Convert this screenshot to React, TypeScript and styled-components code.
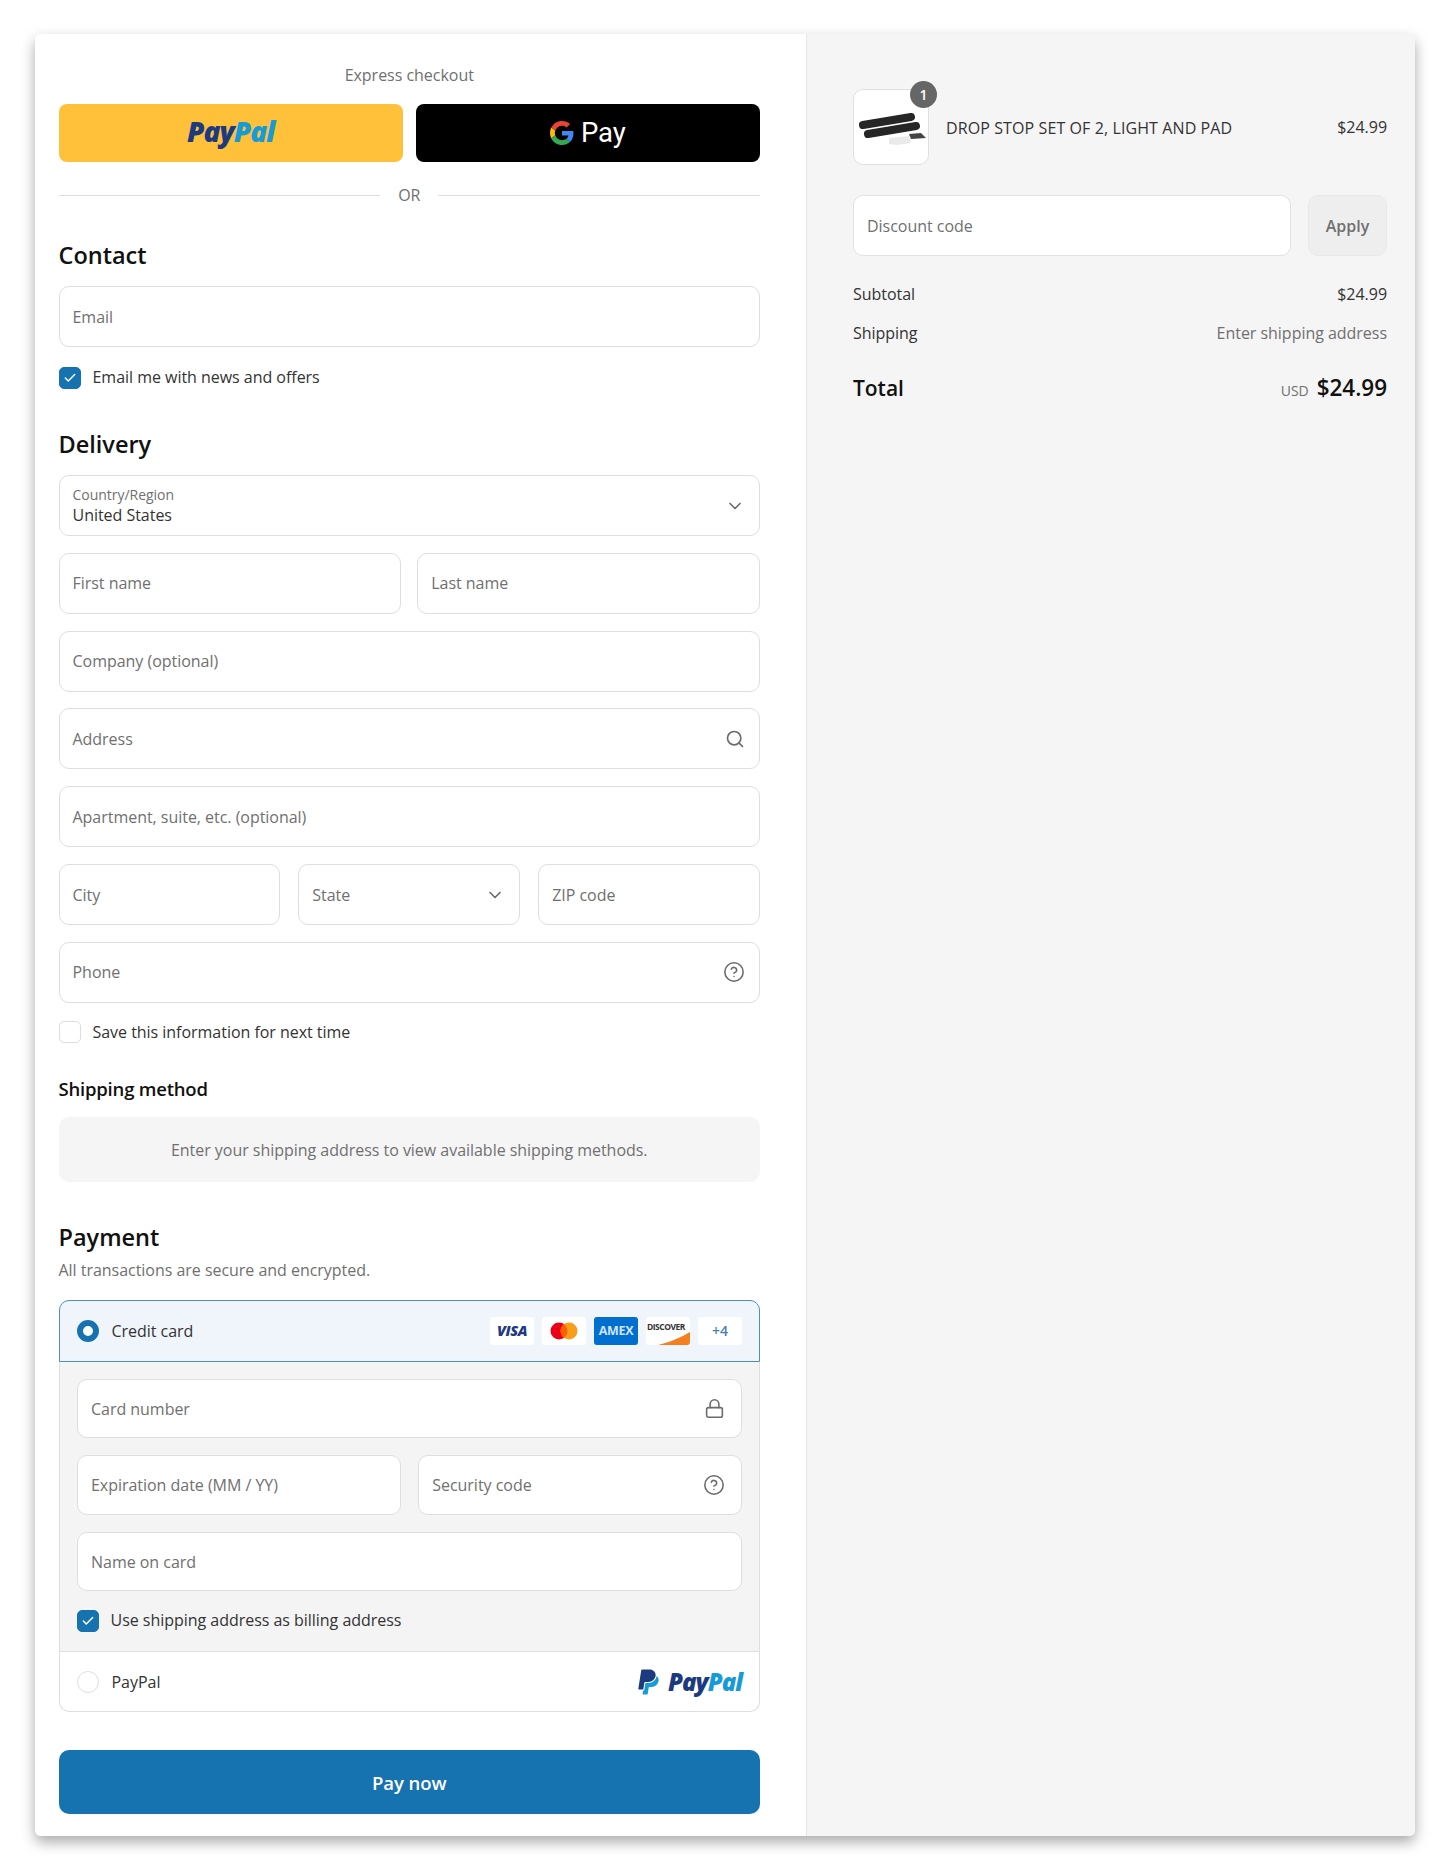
import { CircleHelp, ChevronDown, Lock, Search, Check } from "lucide-react";
import styled, { createGlobalStyle } from "styled-components";

const GlobalStyle = createGlobalStyle`
    html, body {
        margin: 0;
        padding: 0;
        background: #ffffff;
    }
    body {
        font-family: "Open Sans", "Liberation Sans", sans-serif;
        font-size: 16px;
        letter-spacing: -0.03px;
        color: #333333;
    }
`;

const BLUE = "#1773b0";

// page frame
const Page = styled.div`
    width: 1450px;
    height: 1871px;
    padding: 34px 35px 0;
    box-sizing: border-box;
`;

const Card = styled.main`
    display: grid;
    grid-template-columns: 771px 609px;
    height: 1802px;
    border-radius: 6px;
    overflow: hidden;
    box-shadow: 0 6px 14px rgba(0, 0, 0, 0.34);
`;

const LeftPane = styled.section`
    display: flex;
    flex-direction: column;
    padding: 30px 46px 0 23.5px;
    background: #ffffff;
`;

const RightPane = styled.aside`
    display: flex;
    flex-direction: column;
    padding: 47px 28px 0 46px;
    background: #f5f5f5;
    border-left: 1px solid #e6e6e6;
    box-sizing: border-box;
`;

// express checkout
const ExpressLabel = styled.div`
    text-align: center;
    line-height: 22px;
    color: #707070;
`;

const ExpressRow = styled.div`
    display: grid;
    grid-template-columns: 1fr 1fr;
    gap: 13px;
    margin-top: 18px;
`;

const ExpressButton = styled.div<{ $bg: string }>`
    display: flex;
    align-items: center;
    justify-content: center;
    height: 58px;
    border-radius: 8px;
    background: ${props => props.$bg};
`;

const Wordmark = styled.span<{ $size: number; $lift?: number }>`
    margin-bottom: ${props => props.$lift ?? 0}px;
    font-family: "Open Sans", sans-serif;
    font-size: ${props => props.$size}px;
    line-height: 30px;
    font-weight: 800;
    font-style: italic;
    letter-spacing: -1px;
    color: #1c3a80;
    & b {
        font-weight: 800;
        color: #179bd7;
    }
`;

const GPayText = styled.span`
    margin-left: 7px;
    font-family: "Roboto", sans-serif;
    font-size: 27.5px;
    line-height: 34px;
    color: #ffffff;
`;

const OrRow = styled.div`
    display: flex;
    align-items: center;
    gap: 18px;
    height: 20px;
    margin-top: 23px;
    color: #707070;
    &::before, &::after {
        content: "";
        flex: 1;
        height: 1px;
        background: #dedede;
    }
`;

const Heading = styled.h2<{ $top: number }>`
    margin: ${props => props.$top}px 0 0;
    font-size: 23.5px;
    line-height: 28px;
    font-weight: 600;
    letter-spacing: 0;
    color: #111111;
`;

const SubHeading = styled.h3`
    margin: 33px 0 0;
    font-size: 18.5px;
    line-height: 24px;
    font-weight: 600;
    letter-spacing: -0.2px;
    color: #111111;
`;

const Rows = styled.div<{ $top: number; $gap?: number }>`
    display: flex;
    flex-direction: column;
    gap: ${props => props.$gap ?? 16.83}px;
    margin-top: ${props => props.$top}px;
`;

const Cols = styled.div<{ $count: number; $gap: number }>`
    display: grid;
    grid-template-columns: repeat(${props => props.$count}, 1fr);
    gap: ${props => props.$gap}px;
`;

const Field = styled.div<{ $inner?: boolean }>`
    display: flex;
    align-items: center;
    justify-content: space-between;
    height: ${props => props.$inner ? 59.5 : 61}px;
    padding: 0 ${props => props.$inner ? 16 : 14}px 0 ${props => props.$inner ? 13.5 : 13}px;
    box-sizing: border-box;
    background: #ffffff;
    border: 1px solid #dedede;
    border-radius: 10px;
    color: #707070;
    & svg {
        flex: none;
        color: #6b6b6b;
    }
`;

const SelectText = styled.div`
    display: flex;
    flex-direction: column;
    & small {
        font-size: 14px;
        line-height: 18px;
        color: #707070;
    }
    & span {
        line-height: 22px;
        color: #333333;
    }
`;

const CheckRow = styled.label<{ $top: number }>`
    display: flex;
    align-items: center;
    gap: 12px;
    margin-top: ${props => props.$top}px;
    line-height: 23px;
    color: #333333;
`;

const CheckBox = styled.span<{ $on?: boolean }>`
    display: flex;
    align-items: center;
    justify-content: center;
    flex: none;
    width: 22px;
    height: 22px;
    box-sizing: border-box;
    border-radius: 5px;
    background: ${props => props.$on ? BLUE : "#ffffff"};
    border: 1px solid ${props => props.$on ? BLUE : "#dedede"};
    color: #ffffff;
`;

const Notice = styled.div`
    display: flex;
    align-items: center;
    justify-content: center;
    height: 65px;
    padding-top: 1px;
    box-sizing: border-box;
    margin-top: 16px;
    border-radius: 10px;
    background: #f5f5f5;
    color: #707070;
`;

const Muted = styled.p`
    margin: 8px 0 0;
    line-height: 22px;
    color: #707070;
`;

// payment block
const Accordion = styled.div`
    margin-top: 19px;
`;

const MethodRow = styled.div<{ $active?: boolean }>`
    display: flex;
    align-items: center;
    justify-content: space-between;
    height: ${props => props.$active ? 62 : 60}px;
    padding: 0 17px;
    box-sizing: border-box;
    background: ${props => props.$active ? "#f0f5fc" : "#ffffff"};
    border: 1px solid ${props => props.$active ? "#4d8fbf" : "#dedede"};
    border-top-width: ${props => props.$active ? 1 : 0}px;
    border-radius: ${props => props.$active ? "10px 10px 0 0" : "0 0 10px 10px"};
    color: #333333;
`;

const MethodName = styled.div`
    display: flex;
    align-items: center;
    gap: 13px;
`;

const Radio = styled.span<{ $on?: boolean }>`
    flex: none;
    width: 22px;
    height: 22px;
    box-sizing: border-box;
    border-radius: 50%;
    background: #ffffff;
    border: ${props => props.$on ? `6.5px solid ${BLUE}` : "1px solid #dedede"};
`;

const CardBadges = styled.div`
    display: flex;
    gap: 8px;
`;

const CardBadge = styled.span<{ $bg?: string }>`
    position: relative;
    display: flex;
    align-items: center;
    justify-content: center;
    width: 44px;
    height: 28px;
    overflow: hidden;
    border-radius: 3px;
    background: ${props => props.$bg ?? "#ffffff"};
`;

const VisaText = styled.span`
    font-size: 14.5px;
    font-weight: 800;
    font-style: italic;
    letter-spacing: -0.4px;
    color: #1f3a80;
`;

const AmexText = styled.span`
    font-size: 12.5px;
    font-weight: 700;
    letter-spacing: -0.3px;
    color: #cfe4f7;
`;

const DiscoverText = styled.span`
    position: absolute;
    top: 4px;
    left: 1px;
    font-size: 8.5px;
    line-height: 11px;
    font-weight: 700;
    letter-spacing: -0.5px;
    color: #333333;
`;

const DiscoverSwoosh = styled.svg`
    position: absolute;
    inset: 0;
`;

const MoreText = styled.span`
    font-size: 14px;
    font-weight: 600;
    color: #4a7fb0;
`;

const CardPanel = styled.div`
    display: flex;
    flex-direction: column;
    padding: 17px 17px 19px;
    background: #f4f4f4;
    border: 1px solid #dedede;
    border-width: 0 1px 1px;
`;

const PaypalLogo = styled.div`
    display: flex;
    align-items: center;
    gap: 8px;
`;

const PayButton = styled.div`
    display: flex;
    align-items: center;
    justify-content: center;
    height: 64px;
    margin-top: 38px;
    border-radius: 10px;
    background: ${BLUE};
    color: #ffffff;
    font-size: 18.5px;
    font-weight: 600;
`;

// order summary
const ItemRow = styled.div`
    display: flex;
    align-items: center;
    justify-content: space-between;
    height: 76px;
    margin-top: 8px;
`;

const ItemLeft = styled.div`
    display: flex;
    align-items: center;
    gap: 17px;
`;

const ItemName = styled.span`
    padding-top: 1px;
    letter-spacing: 0.1px;
`;

const Thumb = styled.div`
    position: relative;
    width: 76px;
    height: 76px;
    box-sizing: border-box;
    background: #ffffff;
    border: 1px solid #e0e0e0;
    border-radius: 10px;
`;

const CountBadge = styled.span`
    position: absolute;
    top: -9px;
    right: -9px;
    display: flex;
    align-items: center;
    justify-content: center;
    width: 27px;
    height: 27px;
    border-radius: 50%;
    background: #666666;
    color: #ffffff;
    font-size: 14px;
    font-weight: 600;
`;

const Discount = styled.div`
    display: grid;
    grid-template-columns: 438px 79px;
    gap: 17px;
    margin-top: 30px;
`;

const DiscountInput = styled.div`
    display: flex;
    align-items: center;
    height: 61px;
    padding: 0 13px;
    box-sizing: border-box;
    background: #ffffff;
    border: 1px solid #e2e2e2;
    border-radius: 10px;
    color: #707070;
`;

const ApplyButton = styled.div`
    display: flex;
    align-items: center;
    justify-content: center;
    height: 61px;
    box-sizing: border-box;
    background: #eeeeee;
    border: 1px solid #e8e8e8;
    border-radius: 10px;
    color: #707070;
    font-weight: 600;
`;

const SummaryRow = styled.div<{ $top: number }>`
    display: flex;
    align-items: center;
    justify-content: space-between;
    margin-top: ${props => props.$top}px;
    line-height: 24px;
    color: #333333;
`;

const SummaryNote = styled.span`
    color: #707070;
`;

const TotalRow = styled.div`
    display: flex;
    align-items: baseline;
    justify-content: space-between;
    margin-top: 27px;
    line-height: 32px;
    font-size: 21px;
    font-weight: 600;
    color: #111111;
`;

const TotalPrice = styled.div`
    display: flex;
    align-items: baseline;
    gap: 8px;
    font-size: 22.5px;
    & small {
        font-size: 14px;
        font-weight: 400;
        color: #707070;
    }
`;

const GoogleG = () => (
    <svg width="24" height="24" viewBox="0 0 48 48">
        <path fill="#EA4335" d="M24 9.5c3.5 0 6.7 1.2 9.2 3.6l6.9-6.9C35.9 2.4 30.5 0 24 0 14.6 0 6.5 5.4 2.6 13.2l8 6.2C12.5 13.7 17.8 9.5 24 9.5z" />
        <path fill="#4285F4" d="M46.9 24.5c0-1.6-.1-3.1-.4-4.5H24v9h12.9c-.6 3-2.2 5.5-4.7 7.2l7.7 6c4.5-4.2 7-10.3 7-17.7z" />
        <path fill="#FBBC05" d="M10.5 28.6c-.5-1.4-.8-3-.8-4.6s.3-3.2.8-4.6l-8-6.2C.9 16.5 0 20.1 0 24s.9 7.5 2.6 10.8l7.9-6.2z" />
        <path fill="#34A853" d="M24 48c6.5 0 11.9-2.1 15.9-5.8l-7.7-6c-2.2 1.5-4.9 2.3-8.2 2.3-6.2 0-11.5-4.2-13.4-9.9l-8 6.2C6.5 42.6 14.6 48 24 48z" />
    </svg>
);

const PayPalMark = () => (
    <svg width="23" height="28" viewBox="1 0 22 24">
        <path fill="#179bd7" d="M19.79 6.142c-.01.087-.01.175-.023.261a7.76 7.76 0 0 1-7.695 6.598H9.007l-.283 1.795-.013.083-.692 4.39-.134.843-.014.088H6.86l-.497 3.15a.562.562 0 0 0 .555.65h3.612c.34 0 .63-.249.683-.585l.952-6.031a.692.692 0 0 1 .683-.584h2.126a6.793 6.793 0 0 0 6.707-5.752c.306-1.95-.466-3.744-1.89-4.906z" />
        <path fill="#1c3a80" d="M7.016 19.198h-4.2a.562.562 0 0 1-.555-.65L5.093.584A.692.692 0 0 1 5.776 0h7.222c3.417 0 5.904 2.488 5.846 5.5-.006.25-.027.5-.066.747A6.794 6.794 0 0 1 12.071 12H8.743a.69.69 0 0 0-.682.583l-.325 2.056-.013.083-.692 4.39-.015.087z" />
    </svg>
);

const ProductImage = () => (
    <svg width="74" height="74" viewBox="0 0 74 74">
        <path d="M35 48l20-2 2 7-14 2-8-1z" fill="#eaeaea" />
        <path d="M55 44l12-1 5 5-15 1z" fill="#444444" />
        <path d="M9 35L57 27" stroke="#262626" strokeWidth="8" strokeLinecap="round" />
        <path d="M14 44L62 36" stroke="#262626" strokeWidth="8" strokeLinecap="round" />
    </svg>
);

const MastercardIcon = () => (
    <svg width="28" height="18" viewBox="0 0 28 18">
        <circle cx="9" cy="9" r="8.5" fill="#eb001b" />
        <circle cx="19" cy="9" r="8.5" fill="#f79e1b" />
        <path d="M14 2.2a8.5 8.5 0 0 1 0 13.6a8.5 8.5 0 0 1 0-13.6z" fill="#ff5f00" />
    </svg>
);

const DiscoverIcon = () => (
    <>
        <DiscoverText>DISCOVER</DiscoverText>
        <DiscoverSwoosh width="44" height="28" viewBox="0 0 44 28">
            <path d="M12 28C24 25 36 20 44 15v13z" fill="#f48120" />
        </DiscoverSwoosh>
    </>
);

export default function App() {
    return (
        <>
            <GlobalStyle />
            <Page>
                <Card>
                    <LeftPane>
                        <ExpressLabel>Express checkout</ExpressLabel>
                        <ExpressRow>
                            <ExpressButton $bg="#ffc13a">
                                <Wordmark $size={28} $lift={4}>Pay<b>Pal</b></Wordmark>
                            </ExpressButton>
                            <ExpressButton $bg="#000000">
                                <GoogleG />
                                <GPayText>Pay</GPayText>
                            </ExpressButton>
                        </ExpressRow>
                        <OrRow>OR</OrRow>

                        <Heading $top={36}>Contact</Heading>
                        <Rows $top={17}>
                            <Field>Email</Field>
                        </Rows>
                        <CheckRow $top={19}>
                            <CheckBox $on><Check size={14} strokeWidth={2.5} /></CheckBox>
                            Email me with news and offers
                        </CheckRow>

                        <Heading $top={41}>Delivery</Heading>
                        <Rows $top={17}>
                            <Field>
                                <SelectText>
                                    <small>Country/Region</small>
                                    <span>United States</span>
                                </SelectText>
                                <ChevronDown size={20} strokeWidth={2} />
                            </Field>
                            <Cols $count={2} $gap={16}>
                                <Field>First name</Field>
                                <Field>Last name</Field>
                            </Cols>
                            <Field>Company (optional)</Field>
                            <Field>
                                Address
                                <Search size={20} strokeWidth={2} />
                            </Field>
                            <Field>Apartment, suite, etc. (optional)</Field>
                            <Cols $count={3} $gap={18}>
                                <Field>City</Field>
                                <Field>
                                    State
                                    <ChevronDown size={20} strokeWidth={2} />
                                </Field>
                                <Field>ZIP code</Field>
                            </Cols>
                            <Field>
                                Phone
                                <CircleHelp size={22} strokeWidth={1.7} />
                            </Field>
                        </Rows>
                        <CheckRow $top={18}>
                            <CheckBox />
                            Save this information for next time
                        </CheckRow>

                        <SubHeading>Shipping method</SubHeading>
                        <Notice>Enter your shipping address to view available shipping methods.</Notice>

                        <Heading $top={41}>Payment</Heading>
                        <Muted>All transactions are secure and encrypted.</Muted>
                        <Accordion>
                            <MethodRow $active>
                                <MethodName>
                                    <Radio $on />
                                    Credit card
                                </MethodName>
                                <CardBadges>
                                    <CardBadge><VisaText>VISA</VisaText></CardBadge>
                                    <CardBadge><MastercardIcon /></CardBadge>
                                    <CardBadge $bg="#016fd0"><AmexText>AMEX</AmexText></CardBadge>
                                    <CardBadge><DiscoverIcon /></CardBadge>
                                    <CardBadge><MoreText>+4</MoreText></CardBadge>
                                </CardBadges>
                            </MethodRow>
                            <CardPanel>
                                <Rows $top={0} $gap={17}>
                                    <Field $inner>
                                        Card number
                                        <Lock size={21} strokeWidth={1.8} />
                                    </Field>
                                    <Cols $count={2} $gap={17}>
                                        <Field $inner>Expiration date (MM / YY)</Field>
                                        <Field $inner>
                                            Security code
                                            <CircleHelp size={22} strokeWidth={1.7} />
                                        </Field>
                                    </Cols>
                                    <Field $inner>Name on card</Field>
                                </Rows>
                                <CheckRow $top={18}>
                                    <CheckBox $on><Check size={14} strokeWidth={2.5} /></CheckBox>
                                    Use shipping address as billing address
                                </CheckRow>
                            </CardPanel>
                            <MethodRow>
                                <MethodName>
                                    <Radio />
                                    PayPal
                                </MethodName>
                                <PaypalLogo>
                                    <PayPalMark />
                                    <Wordmark $size={24}>Pay<b>Pal</b></Wordmark>
                                </PaypalLogo>
                            </MethodRow>
                        </Accordion>
                        <PayButton>Pay now</PayButton>
                    </LeftPane>

                    <RightPane>
                        <ItemRow>
                            <ItemLeft>
                                <Thumb>
                                    <ProductImage />
                                    <CountBadge>1</CountBadge>
                                </Thumb>
                                <ItemName>DROP STOP SET OF 2, LIGHT AND PAD</ItemName>
                            </ItemLeft>
                            $24.99
                        </ItemRow>
                        <Discount>
                            <DiscountInput>Discount code</DiscountInput>
                            <ApplyButton>Apply</ApplyButton>
                        </Discount>
                        <SummaryRow $top={26}>
                            <span>Subtotal</span>
                            <span>$24.99</span>
                        </SummaryRow>
                        <SummaryRow $top={15}>
                            <span>Shipping</span>
                            <SummaryNote>Enter shipping address</SummaryNote>
                        </SummaryRow>
                        <TotalRow>
                            <span>Total</span>
                            <TotalPrice>
                                <small>USD</small>
                                $24.99
                            </TotalPrice>
                        </TotalRow>
                    </RightPane>
                </Card>
            </Page>
        </>
    );
}
